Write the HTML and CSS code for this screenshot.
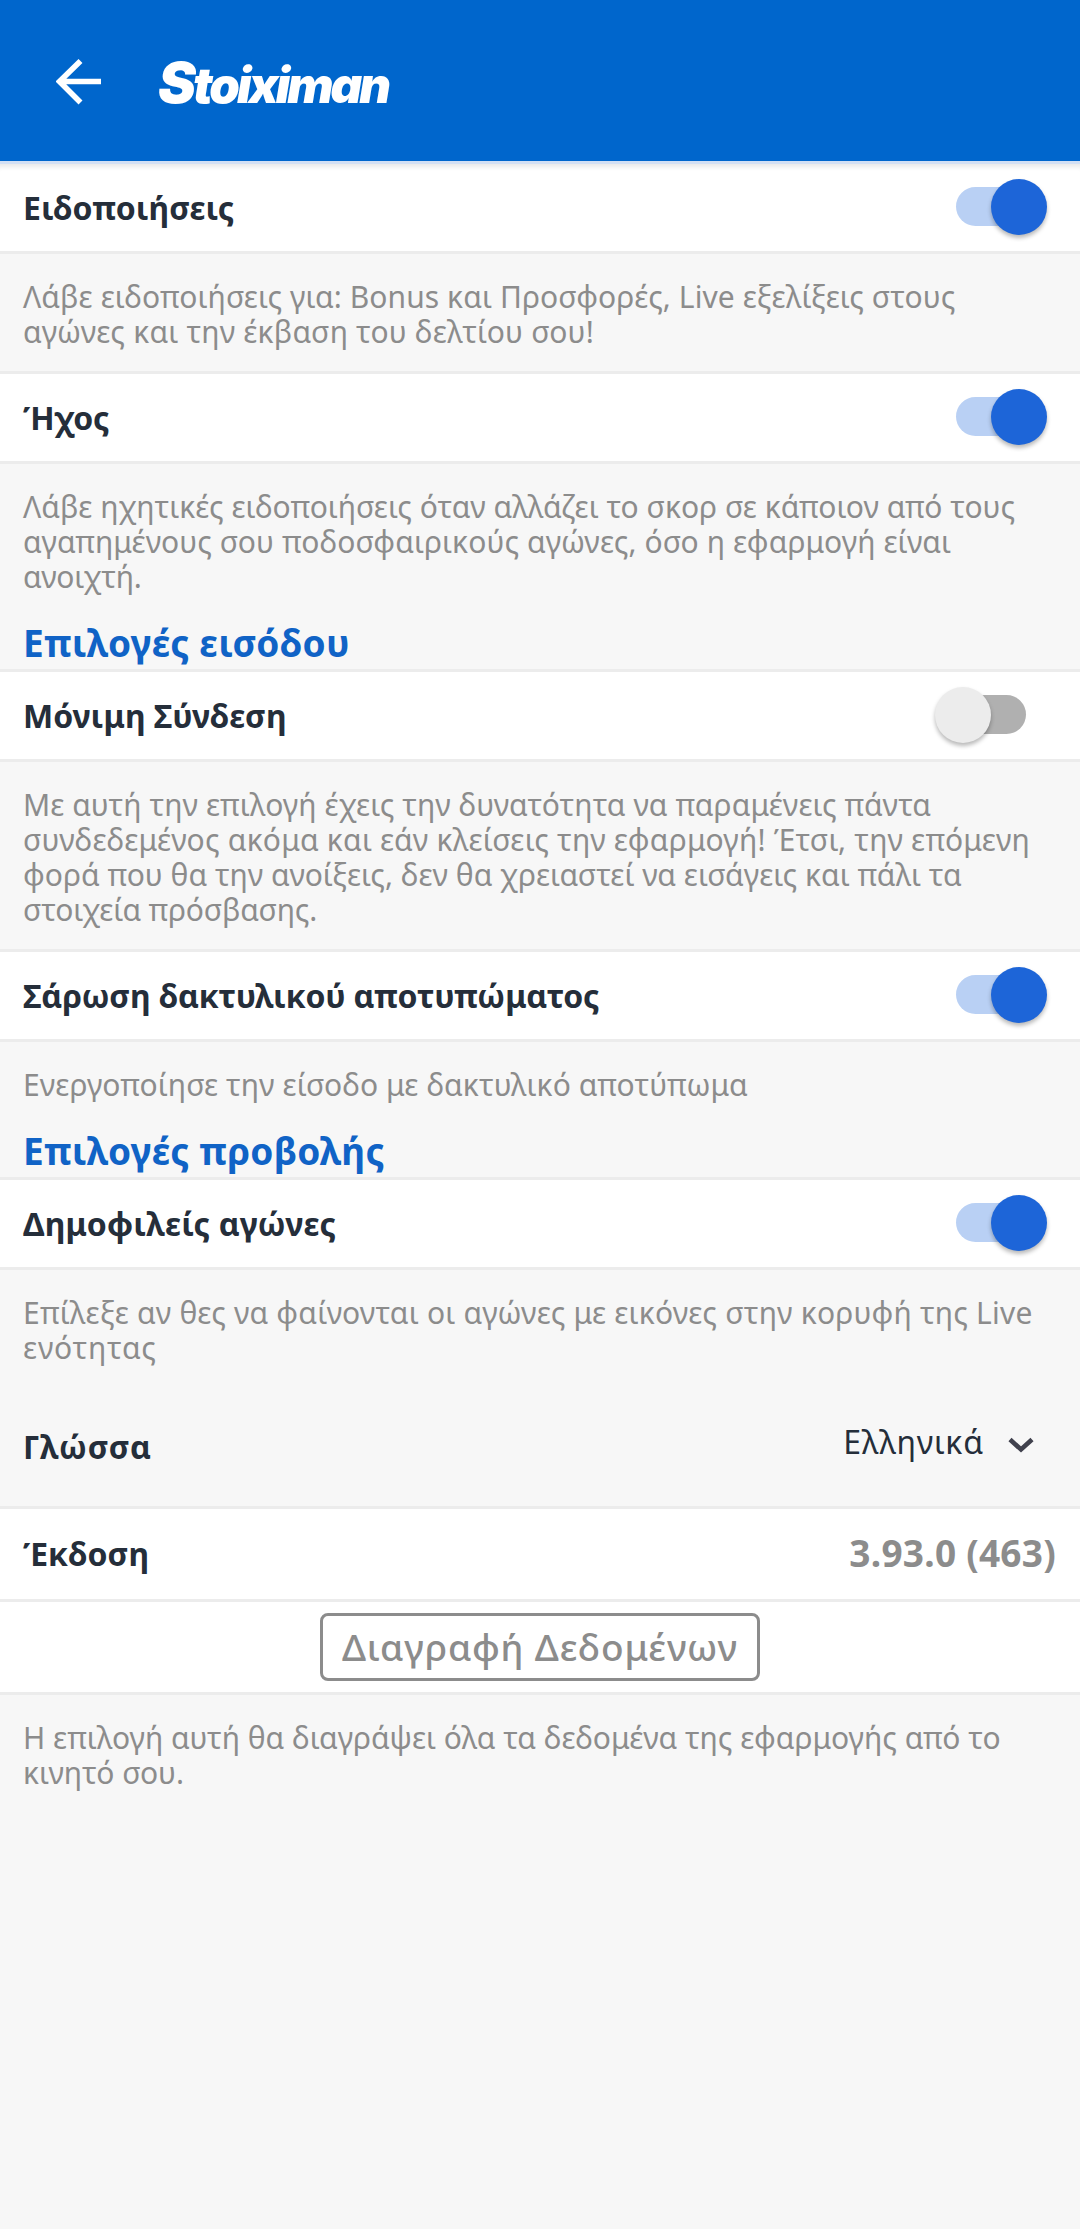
FILE: index.html
```html
<!DOCTYPE html>
<html lang="el">
<head>
<meta charset="utf-8">
<title>Stoiximan</title>
<link rel="stylesheet" href="styles.css">
</head>
<body>
<header class="topbar">
  <svg class="back" viewBox="0 0 46 46" aria-hidden="true"><path d="M24.500 2 3.500 22.500 24.500 43.500M3 22.500H45" fill="none" stroke="#fff" stroke-width="5.600"/></svg>
  <h1 class="logo"><span class="logo-initial">S</span>toiximan</h1>
</header>
<main>
  <section class="row row-first"><h2 class="label">Ειδοποιήσεις</h2><span class="switch on"><i class="thumb"></i></span></section>
  <p class="note note-boxed"><span class="loose">Λάβε ειδοποιήσεις για: Bonus και Προσφορές, Live εξελίξεις στους</span><span class="wide">αγώνες και την έκβαση του δελτίου σου!</span></p>
  <section class="row"><h2 class="label tight">Ήχος</h2><span class="switch on"><i class="thumb"></i></span></section>
  <p class="note"><span>Λάβε ηχητικές ειδοποιήσεις όταν αλλάζει το σκορ σε κάποιον από τους</span><span class="loose">αγαπημένους σου ποδοσφαιρικούς αγώνες, όσο η εφαρμογή είναι</span><span class="tight">ανοιχτή.</span></p>
  <h2 class="group">Επιλογές εισόδου</h2>
  <section class="row"><h2 class="label">Μόνιμη Σύνδεση</h2><span class="switch"><i class="thumb"></i></span></section>
  <p class="note note-boxed"><span class="loose">Με αυτή την επιλογή έχεις την δυνατότητα να παραμένεις πάντα</span><span class="wide">συνδεδεμένος ακόμα και εάν κλείσεις την εφαρμογή! Έτσι, την επόμενη</span><span>φορά που θα την ανοίξεις, δεν θα χρειαστεί να εισάγεις και πάλι τα</span><span class="tight">στοιχεία πρόσβασης.</span></p>
  <section class="row"><h2 class="label tight">Σάρωση δακτυλικού αποτυπώματος</h2><span class="switch on"><i class="thumb"></i></span></section>
  <p class="note"><span class="loose">Ενεργοποίησε την είσοδο με δακτυλικό αποτύπωμα</span></p>
  <h2 class="group">Επιλογές προβολής</h2>
  <section class="row"><h2 class="label wide">Δημοφιλείς αγώνες</h2><span class="switch on"><i class="thumb"></i></span></section>
  <p class="note"><span class="wide">Επίλεξε αν θες να φαίνονται οι αγώνες με εικόνες στην κορυφή της Live</span><span class="wider">ενότητας</span></p>
  <section class="language"><h2 class="label wider">Γλώσσα</h2><div class="select"><span class="choice wider">Ελληνικά</span><svg class="chevron" viewBox="0 0 26 16" aria-hidden="true"><path d="M2 2.500 13 12.500 24 2.500" fill="none" stroke="#40414d" stroke-width="4.600"/></svg></div></section>
  <section class="row row-version"><h2 class="label">Έκδοση</h2><span class="version">3.93.0 (463)</span></section>
  <section class="row row-action"><button class="clear">Διαγραφή Δεδομένων</button></section>
  <p class="note"><span>Η επιλογή αυτή θα διαγράψει όλα τα δεδομένα της εφαρμογής από το</span><span>κινητό σου.</span></p>
</main>
</body>
</html>
```
FILE: styles.css
```css
* { box-sizing: border-box; margin: 0; padding: 0; }
body { background: #f7f7f7; color: #252e3a; font-family: "Noto Sans", "Open Sans", sans-serif; width: 1080px; min-height: 2229px; }
.topbar { height: 161px; background: #0066cc; display: flex; align-items: flex-start; padding: 59px 0 0 56px; }
.back { width: 46px; height: 46px; flex: none; }
.logo { margin: -10px 0 0 56px; color: #fff; font: italic 900 49px/73px Inter, sans-serif; font-feature-settings: "cv11"; letter-spacing: -2.900px; white-space: nowrap; }
.logo-initial { font-size: 57px; line-height: 1; }
.row { height: 93px; background: #fff; border: solid #ececec; border-width: 3px 0; display: flex; align-items: center; justify-content: space-between; padding: 0 33px 2px 23px; }
.row-first { border-top-color: #d3e0f4; box-shadow: inset 0 7px 5px -4px #e9e9e9; }
.label { font-size: 32px; line-height: 44px; font-weight: 700; white-space: nowrap; }
.row .label { padding-top: 2px; }
.switch { width: 112px; height: 56px; flex: none; display: flex; align-items: center; position: relative; }
.switch::before { content: ""; position: absolute; left: 21px; top: 8px; width: 70px; height: 39px; border-radius: 20px; background: #b0b0b0; }
.switch.on::before { background: #b9d0f4; }
.thumb { position: relative; width: 56px; height: 56px; border-radius: 50%; background: #ececec; box-shadow: 0 3px 4px rgba(0,0,0,.28); }
.on .thumb { margin-left: auto; background: #1d65d8; }
.note { color: #8c8c8c; font-size: 30px; line-height: 35px; padding: 25px 23px 0; }
.note span { display: block; white-space: nowrap; }
.note-boxed { padding-bottom: 22px; }
.tight { letter-spacing: -.18px; }
.loose { letter-spacing: .08px; }
.wide { letter-spacing: .2px; }
.wider { letter-spacing: .8px; }
.group { color: #1063c6; font-size: 37px; line-height: 50px; letter-spacing: .25px; padding: 24px 23px 1px; white-space: nowrap; }
.language { height: 141px; display: flex; justify-content: space-between; padding: 60px 46px 0 23px; }
.select { display: flex; gap: 24px; }
.choice { font-size: 32px; line-height: 44px; margin-top: -5px; }
.chevron { width: 26px; height: 16px; margin-top: 12px; }
.row-version { height: 96px; padding-right: 24px; padding-bottom: 3px; }
.version { color: #8c8c8c; font-size: 37px; font-weight: 700; letter-spacing: .25px; }
.row-action { border-top: 0; justify-content: center; padding: 0; }
.clear { width: 440px; height: 68px; border: 3px solid #8c8c8c; border-radius: 8px; background: #fff; color: #8c8c8c; font: 500 37px/50px "Noto Sans", sans-serif; letter-spacing: .9px; }
```
